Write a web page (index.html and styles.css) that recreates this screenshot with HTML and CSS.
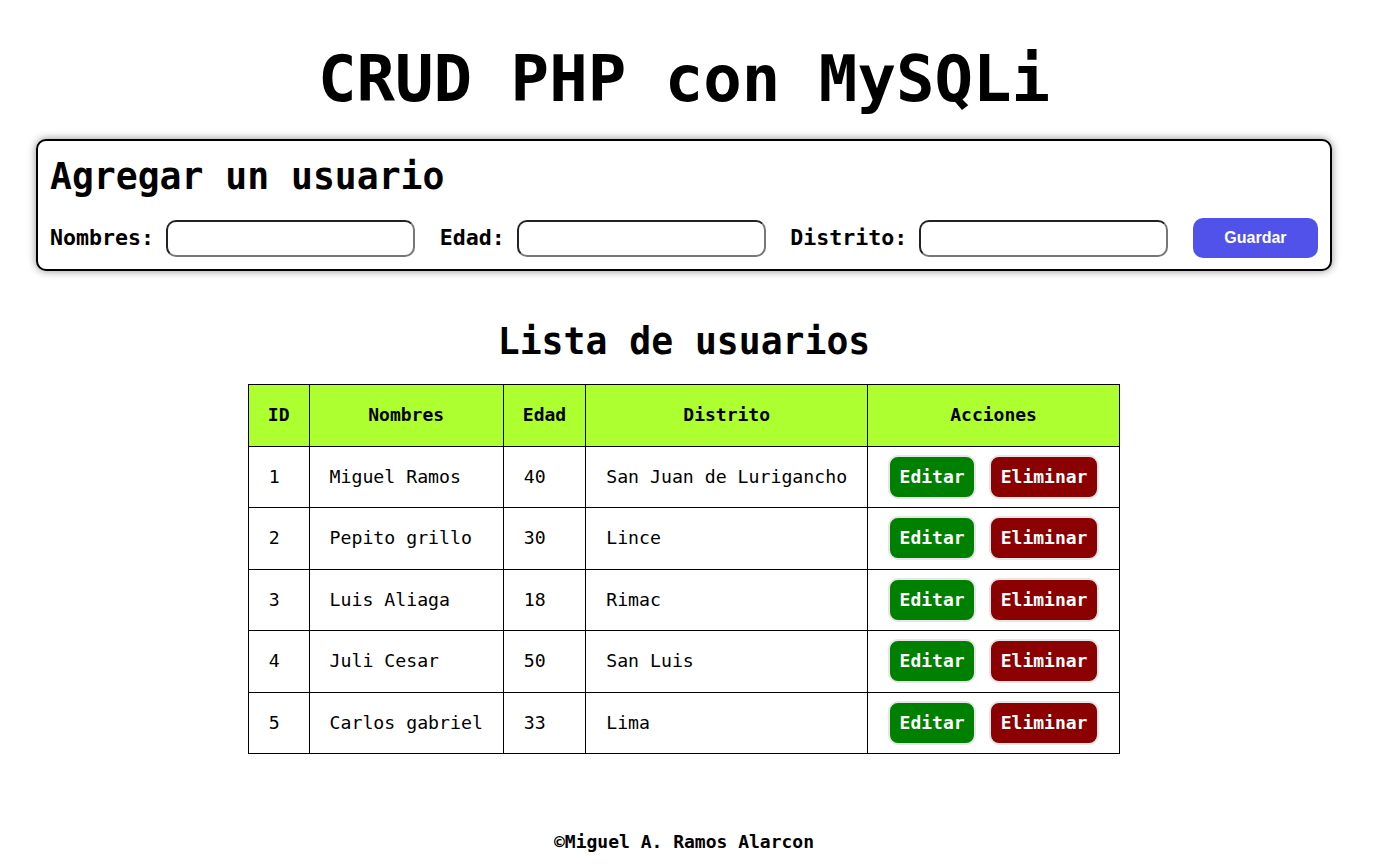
FILE: index.html
```html
<!DOCTYPE html>
<html lang="es">
<head>
<meta charset="utf-8">
<title>CRUD PHP con MySQLi</title>
<link rel="stylesheet" href="styles.css">
</head>
<body>
<div class="page">
  <h1 class="title">CRUD PHP con MySQLi</h1>

  <form class="card">
    <h2 class="card-title">Agregar un usuario</h2>
    <div class="form-row">
      <div class="field">
        <label class="label">Nombres:</label>
        <input class="input" type="text">
      </div>
      <div class="field">
        <label class="label">Edad:</label>
        <input class="input" type="text">
      </div>
      <div class="field">
        <label class="label">Distrito:</label>
        <input class="input" type="text">
      </div>
      <button class="btn-save" type="button">Guardar</button>
    </div>
  </form>

  <h2 class="list-title">Lista de usuarios</h2>

  <table class="users">
    <thead>
      <tr>
        <th>ID</th>
        <th>Nombres</th>
        <th>Edad</th>
        <th>Distrito</th>
        <th>Acciones</th>
      </tr>
    </thead>
    <tbody>
      <tr>
        <td>1</td><td>Miguel Ramos</td><td>40</td><td>San Juan de Lurigancho</td>
        <td class="actions"><div class="btns"><a class="btn btn-edit">Editar</a><a class="btn btn-del">Eliminar</a></div></td>
      </tr>
      <tr>
        <td>2</td><td>Pepito grillo</td><td>30</td><td>Lince</td>
        <td class="actions"><div class="btns"><a class="btn btn-edit">Editar</a><a class="btn btn-del">Eliminar</a></div></td>
      </tr>
      <tr>
        <td>3</td><td>Luis Aliaga</td><td>18</td><td>Rimac</td>
        <td class="actions"><div class="btns"><a class="btn btn-edit">Editar</a><a class="btn btn-del">Eliminar</a></div></td>
      </tr>
      <tr>
        <td>4</td><td>Juli Cesar</td><td>50</td><td>San Luis</td>
        <td class="actions"><div class="btns"><a class="btn btn-edit">Editar</a><a class="btn btn-del">Eliminar</a></div></td>
      </tr>
      <tr>
        <td>5</td><td>Carlos gabriel</td><td>33</td><td>Lima</td>
        <td class="actions"><div class="btns"><a class="btn btn-edit">Editar</a><a class="btn btn-del">Eliminar</a></div></td>
      </tr>
    </tbody>
  </table>

  <footer class="footer">©Miguel A. Ramos Alarcon</footer>
</div>
</body>
</html>
```

FILE: styles.css
```css
* { box-sizing: border-box; }

html, body {
  margin: 0;
  padding: 0;
  background: #ffffff;
  color: #000000;
  font-family: "DejaVu Sans Mono", "Liberation Mono", monospace;
}

.page {
  width: 1296px;
  margin-left: 36px;
}

.title {
  margin: 42px 0 0;
  font-size: 64px;
  line-height: 74px;
  font-weight: bold;
  text-align: center;
}

.card {
  margin-top: 23px;
  border: 2px solid #000;
  border-radius: 10px;
  box-shadow: 0 0 8px rgba(0, 0, 0, 0.45);
  padding: 12px 12px 11px;
  background: #fff;
}

.card-title {
  margin: 3px 0 0;
  font-size: 36.4px;
  line-height: 42px;
  font-weight: bold;
}

.form-row {
  margin-top: 20px;
  display: flex;
  align-items: center;
  justify-content: space-between;
  height: 40px;
}

.field {
  display: flex;
  align-items: center;
  gap: 12px;
}

.label {
  font-size: 21.6px;
  line-height: 26px;
  font-weight: bold;
}

.input {
  width: 249px;
  height: 37px;
  border: 2px solid;
  border-color: #222 #777 #777 #222;
  border-radius: 10px;
  background: #fff;
  padding: 0 8px;
  font-family: inherit;
  font-size: 16px;
}

.btn-save {
  width: 125px;
  height: 40px;
  border: none;
  border-radius: 10px;
  background: #5152ea;
  color: #fff;
  font-family: "Liberation Sans", Arial, sans-serif;
  font-size: 16px;
  font-weight: bold;
}

.list-title {
  margin: 50px 0 0;
  font-size: 36.4px;
  line-height: 42px;
  font-weight: bold;
  text-align: center;
}

.users {
  margin: 21px auto 0;
  border-collapse: collapse;
  font-size: 18.2px;
  line-height: 20.5px;
}

.users th,
.users td {
  border: 1px solid #000;
  padding: 20px;
  white-space: nowrap;
}

.users th {
  padding: 20px 19px;
  font-size: 18px;
  background: #adff2f;
  font-weight: bold;
  text-align: center;
}

.users td {
  text-align: left;
}

.users td.actions {
  padding: 8px 20px;
}

.btns {
  display: flex;
  gap: 13px;
}

.btn {
  display: inline-flex;
  align-items: center;
  justify-content: center;
  height: 44px;
  border: 2px solid #e6e6e6;
  border-radius: 10px;
  color: #fff;
  font-weight: bold;
  font-size: 18px;
}

.btn-edit {
  width: 88px;
  background: #008000;
}

.btn-del {
  width: 110px;
  background: #8b0000;
}

.footer {
  margin-top: 77px;
  text-align: center;
  font-size: 18px;
  line-height: 21px;
  font-weight: bold;
}
```
